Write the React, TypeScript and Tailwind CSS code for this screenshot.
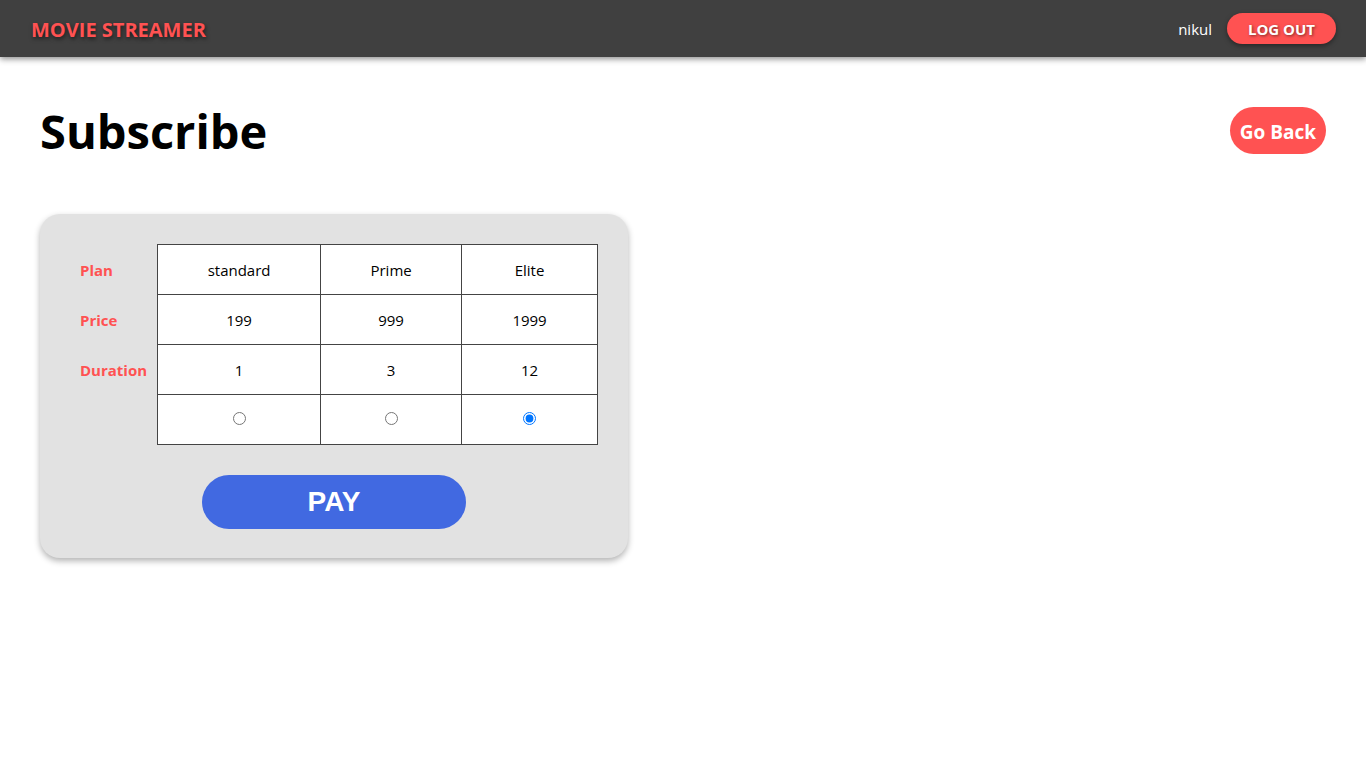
import React, { useState } from "react";

const plans = [
  { name: "standard", price: "199", duration: "1" },
  { name: "Prime", price: "999", duration: "3" },
  { name: "Elite", price: "1999", duration: "12" },
];

export default function App() {
  const [sel, setSel] = useState(2);
  const font = { fontFamily: '"Open Sans", "Noto Sans", sans-serif' };
  return (
    <div className="min-h-screen bg-white" style={font}>
      <nav className="h-[57px] bg-[#404040] flex items-center justify-between pl-[31px] pr-[30px] pt-[2px] shadow-[0_2px_6px_rgba(0,0,0,0.45)] relative">
        <div className="text-[#ff5252] font-bold text-[20px] [text-shadow:1px_2px_4px_rgba(0,0,0,0.6)]">
          MOVIE STREAMER
        </div>
        <div className="flex items-center gap-[15px] -mt-[2px]">
          <span className="text-white text-[15px] pt-[2px]">nikul</span>
          <button className="h-[31px] w-[109px] rounded-full bg-[#ff5252] text-white font-bold text-[15px] pt-[1px] [text-shadow:1px_1px_3px_rgba(0,0,0,0.5)] shadow-[0_2px_5px_rgba(0,0,0,0.4)]">
            LOG OUT
          </button>
        </div>
      </nav>
      <main className="px-[40px]">
        <div className="flex items-center justify-between mt-[49px] h-[49px]">
          <h1 className="text-[47px] font-bold leading-[47px] text-black pt-[2px]">Subscribe</h1>
          <button className="h-[47px] w-[96px] rounded-full bg-[#ff5252] text-white font-bold text-[19px] pt-[3px]">
            Go Back
          </button>
        </div>
        <div className="mt-[59px] w-[588px] bg-[#e2e2e2] rounded-[20px] p-[30px] pb-[29px] shadow-[0_3px_6px_rgba(0,0,0,0.3)]">
          <table className="w-full border-collapse text-[15px] text-black">
            <tbody>
              <tr className="h-[50px]">
                <th className="text-left px-[10px] pt-[2px] text-[#ff5252] font-bold text-[15px] w-[87px]">Plan</th>
                {plans.map((p, i) => (
                  <td key={i} className={`border border-[#444] bg-white text-center pt-[2px] ${i === 0 ? "w-[163px]" : i === 1 ? "w-[141px]" : ""}`}>
                    {p.name}
                  </td>
                ))}
              </tr>
              <tr className="h-[50px]">
                <th className="text-left px-[10px] pt-[2px] text-[#ff5252] font-bold text-[15px]">Price</th>
                {plans.map((p, i) => (
                  <td key={i} className="border border-[#444] bg-white text-center pt-[2px]">{p.price}</td>
                ))}
              </tr>
              <tr className="h-[50px]">
                <th className="text-left px-[10px] pt-[2px] text-[#ff5252] font-bold text-[15px]">Duration</th>
                {plans.map((p, i) => (
                  <td key={i} className="border border-[#444] bg-white text-center pt-[2px]">{p.duration}</td>
                ))}
              </tr>
              <tr className="h-[50px]">
                <th></th>
                {plans.map((p, i) => (
                  <td key={i} className="border border-[#444] bg-white text-center p-0">
                    <input
                      type="radio"
                      name="plan"
                      checked={sel === i}
                      onChange={() => setSel(i)}
                      className="block mx-auto w-[13px] h-[13px] -mt-[2px]"
                    />
                  </td>
                ))}
              </tr>
            </tbody>
          </table>
          <div className="flex justify-center mt-[30px]">
            <button
              className="w-[264px] h-[54px] rounded-full bg-[#4169e1] text-white font-bold text-[28px]"
              style={{ fontFamily: '"Liberation Sans", Arial, sans-serif' }}
            >
              PAY
            </button>
          </div>
        </div>
      </main>
    </div>
  );
}
